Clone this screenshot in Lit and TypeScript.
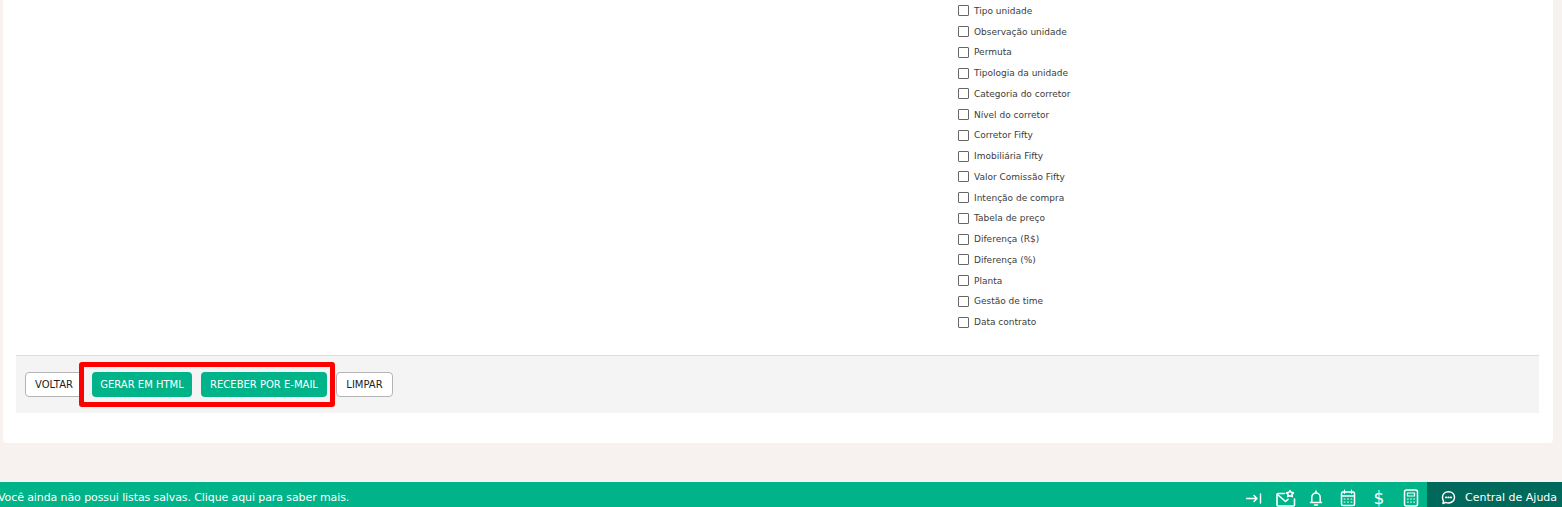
import { LitElement, html, css, svg } from "lit";
import { customElement } from "lit/decorators.js";

const FIELDS = [
  "Tipo unidade", "Observação unidade", "Permuta", "Tipologia da unidade",
  "Categoria do corretor", "Nível do corretor", "Corretor Fifty", "Imobiliária Fifty",
  "Valor Comissão Fifty", "Intenção de compra", "Tabela de preço", "Diferença (R$)",
  "Diferença (%)", "Planta", "Gestão de time", "Data contrato",
];

const icon = (cls: string, w: number, body: unknown) =>
  html`<svg class="ico ${cls}" width="${w}" height="18" viewBox="0 0 ${w} 18" fill="none" stroke="#fff" stroke-width="1.5" stroke-linecap="round" stroke-linejoin="round">${body}</svg>`;

@customElement("app-root")
export class AppRoot extends LitElement {
  static styles = css`
    :host {
      display: flex; flex-direction: column; height: 507px; overflow: hidden;
      background: #f7f2ef; font-family: "DejaVu Sans", Verdana, sans-serif; color: #333;
    }
    .card {
      height: 443px; margin: 0 9px 0 3px; box-sizing: border-box; background: #fff;
      border-radius: 0 0 4px 4px; padding: 0 14px 30px 13px;
      display: flex; flex-direction: column;
    }
    .fields { flex: 1; padding: 0.5px 0 0 942px; }
    .list { list-style: none; margin: 0; padding: 0; display: flex; flex-direction: column; }
    .list li {
      height: 20.75px; display: flex; align-items: center; gap: 5px;
      font-size: 9px; line-height: 12px; color: #3c3c3c; white-space: nowrap;
    }
    .box { width: 9px; height: 9px; border: 1px solid #666; border-radius: 1px; background: #fff; flex: none; }
    .bar {
      position: relative; height: 58px; box-sizing: border-box; background: #f4f4f4;
      border-top: 1px solid #ddd; padding: 16px 9px; display: flex; gap: 9px; align-items: flex-start;
    }
    .btn {
      height: 25px; box-sizing: border-box; font: 10px/1 "DejaVu Sans", Verdana, sans-serif;
      border-radius: 4px; display: flex; align-items: center; justify-content: center;
      white-space: nowrap; padding: 0;
    }
    .ghost { background: #fff; border: 1px solid #b4b4b4; color: #222; }
    .primary { background: #00b388; border: 0; color: #fff; }
    .w-voltar { width: 58px; } .w-gerar { width: 100px; } .w-receber { width: 126px; } .w-limpar { width: 57px; }
    .mark {
      position: absolute; left: 63px; top: 6px; width: 256px; height: 45px; box-sizing: border-box;
      border: 5px solid #fe0000; border-radius: 3px; pointer-events: none;
    }
    .spacer { flex: 1; }
    .foot { height: 25px; flex: none; background: #00b388; color: #fff; display: flex; }
    .msg {
      flex: 1; box-sizing: border-box; padding-top: 6px; display: flex; align-items: center;
      font-size: 11px; letter-spacing: -0.1px; white-space: nowrap; text-indent: -2px;
    }
    .icons { display: flex; align-items: center; box-sizing: border-box; padding-top: 6px; }
    .ico { display: block; flex: none; }
    .m-mail { margin-left: 13px; } .m-bell { margin-left: 13px; } .m-cal { margin-left: 17px; }
    .m-calc { margin-left: 18px; }
    .dollar { margin-left: 17.5px; width: 12px; text-align: center; font-size: 17px; line-height: 18px; color: #fff; }
    .help {
      width: 135px; height: 25px; box-sizing: border-box; background: #00695c; display: flex; align-items: center;
      gap: 9px; padding: 6px 0 0 14px; font-size: 11px; margin-left: 8px; white-space: nowrap;
    }
  `;

  render() {
    return html`
      <section class="card">
        <div class="fields">
          <ul class="list">
            ${FIELDS.map((f) => html`<li><span class="box"></span><span>${f}</span></li>`)}
          </ul>
        </div>
        <div class="bar">
          <button class="btn ghost w-voltar">VOLTAR</button>
          <button class="btn primary w-gerar">GERAR EM HTML</button>
          <button class="btn primary w-receber">RECEBER POR E-MAIL</button>
          <button class="btn ghost w-limpar">LIMPAR</button>
          <div class="mark"></div>
        </div>
      </section>
      <div class="spacer"></div>
      <footer class="foot">
        <div class="msg">Você ainda não possui listas salvas. Clique aqui para saber mais.</div>
        <div class="icons">
          ${icon("", 18, svg`<path d="M1.500 9.500h10.500M9 6.500l3 3-3 3M15.500 5v9" stroke-width="1.400"/>`)}
          ${icon("m-mail", 20, svg`<path d="M8.500 4.500H2a1 1 0 0 0-1 1V16a1 1 0 0 0 1 1h15.500a1 1 0 0 0 1-1v-6" stroke-width="1.600"/><path d="M1.500 5.500l8 7 2.500-2.200" stroke-width="1.600"/><path d="M14 1.700l1.200 1.700 2.200.4-1.400 1.600.3 2.200-2.300-.8-2.300.8.300-2.200-1.400-1.600 2.200-.4z" stroke-width="1.600"/>`)}
          ${icon("m-bell", 14, svg`<path d="M7 2v1.500M2.800 13V8.200a4.200 4.200 0 0 1 8.400 0V13M1.500 13.500h11"/><path d="M5.500 16h3"/>`)}
          ${icon("m-cal", 16, svg`<rect x="1.500" y="3" width="13" height="13.500" rx="1.500"/><path d="M1.500 7h13M4.500 1.200v3M11.500 1.200v3" stroke-width="1.300"/><path d="M4.200 10h.8M7.600 10h.8M11 10h.8M4.200 13h.8M7.600 13h.8M11 13h.8" stroke-width="1.200"/>`)}
          <span class="dollar">$</span>
          ${icon("m-calc", 16, svg`<rect x="1.500" y="1" width="13" height="16" rx="2"/><rect x="4.500" y="4" width="7" height="3" stroke-width="1.200"/><path d="M4.500 10h.8M7.600 10h.8M10.700 10h.8M4.500 13h.8M7.600 13h.8M10.700 13h.8" stroke-width="1.200"/>`)}
        </div>
        <div class="help">
          ${icon("", 15, svg`<path d="M7.500 2.700c3.400 0 6 2.400 6 5.700 0 3.200-2.600 5.600-6 5.600-1 0-2-.2-2.800-.6L2 14.500l.5-2.800A5.500 5.500 0 0 1 1.500 8.400c0-3.300 2.600-5.700 6-5.700z"/><path d="M4.900 8.400h.5M7.300 8.400h.5M9.700 8.400h.5" stroke-width="1.800"/>`)}
          <span>Central de Ajuda</span>
        </div>
      </footer>
    `;
  }
}
